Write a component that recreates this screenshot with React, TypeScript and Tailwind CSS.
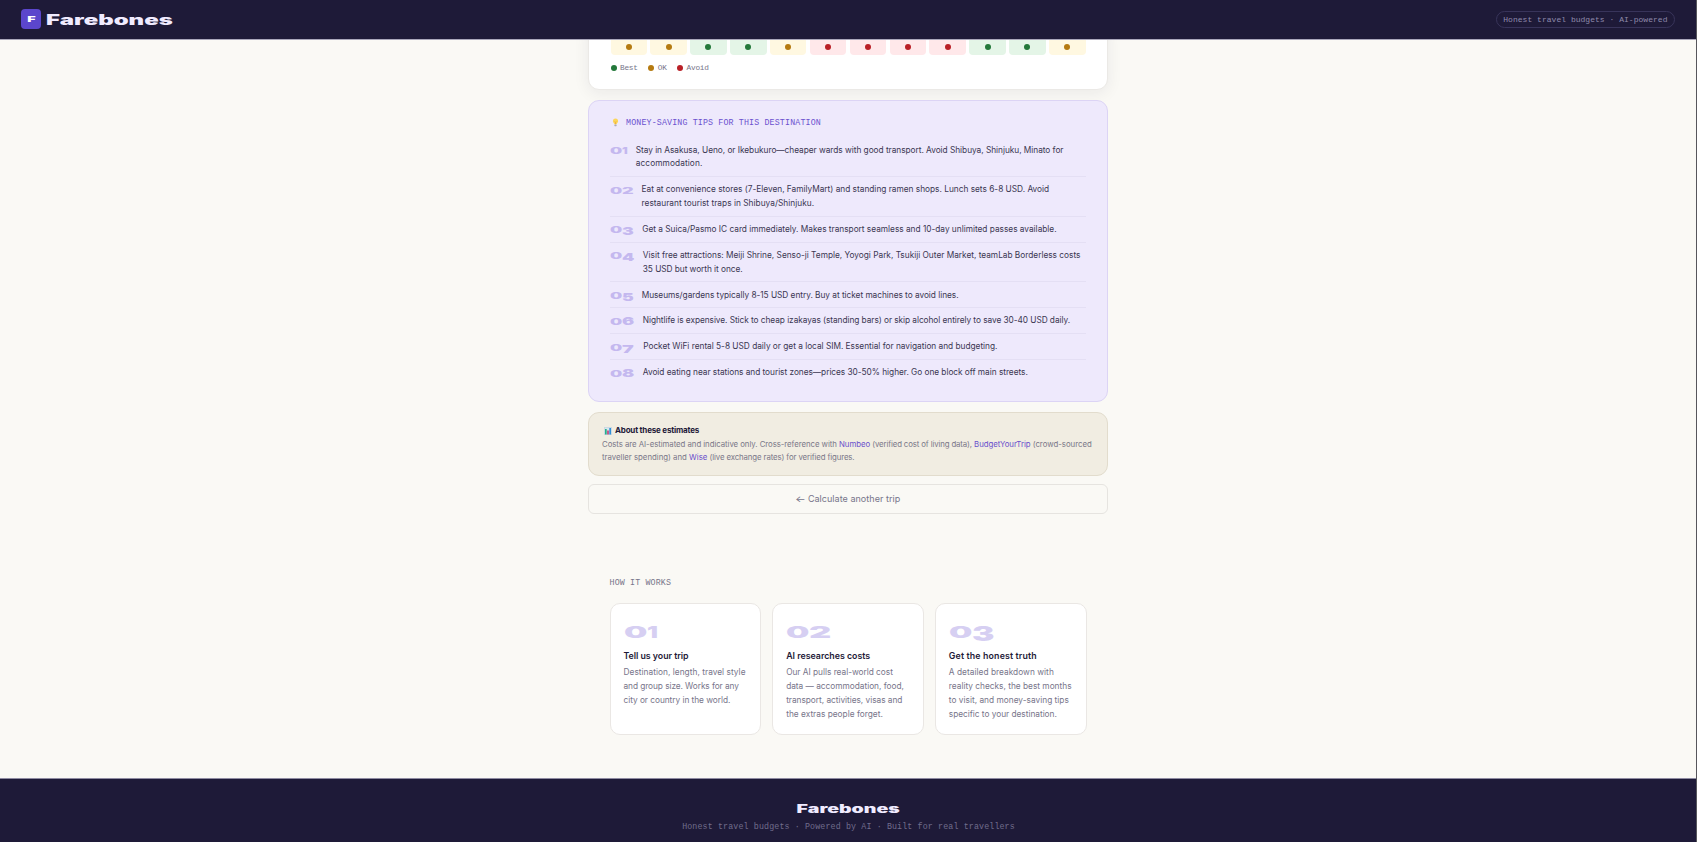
import type { ReactNode } from 'react';

type Rating = 'best' | 'ok' | 'avoid';

const MONO = "font-['Liberation_Mono',monospace]";

const CELL_BG: Record<Rating, string> = {
    best: 'bg-[#e4f5e7]',
    ok: 'bg-[#fff8e1]',
    avoid: 'bg-[#ffe8ea]',
};

const DOT_BG: Record<Rating, string> = {
    best: 'bg-[#23783a]',
    ok: 'bg-[#b57a10]',
    avoid: 'bg-[#b92027]',
};

const MONTHS: { name: string; rating: Rating }[] = [
    { name: 'Jan', rating: 'ok' },
    { name: 'Feb', rating: 'ok' },
    { name: 'Mar', rating: 'best' },
    { name: 'Apr', rating: 'best' },
    { name: 'May', rating: 'ok' },
    { name: 'Jun', rating: 'avoid' },
    { name: 'Jul', rating: 'avoid' },
    { name: 'Aug', rating: 'avoid' },
    { name: 'Sep', rating: 'avoid' },
    { name: 'Oct', rating: 'best' },
    { name: 'Nov', rating: 'best' },
    { name: 'Dec', rating: 'ok' },
];

const LEGEND: { label: string; rating: Rating }[] = [
    { label: 'Best', rating: 'best' },
    { label: 'OK', rating: 'ok' },
    { label: 'Avoid', rating: 'avoid' },
];

const TIPS: { digit: string; width: string; lines: { text: string; track: string }[] }[] = [
    {
        digit: '1',
        width: 'w-[25.7px]',
        lines: [
            {
                text: 'Stay in Asakusa, Ueno, or Ikebukuro—cheaper wards with good transport. Avoid Shibuya, Shinjuku, Minato for',
                track: 'tracking-[-0.031px]',
            },
            { text: 'accommodation.', track: 'tracking-[0.1px]' },
        ],
    },
    {
        digit: '2',
        width: 'w-[31.5px]',
        lines: [
            {
                text: 'Eat at convenience stores (7-Eleven, FamilyMart) and standing ramen shops. Lunch sets 6-8 USD. Avoid',
                track: 'tracking-[-0.004px]',
            },
            { text: 'restaurant tourist traps in Shibuya/Shinjuku.', track: 'tracking-[0.027px]' },
        ],
    },
    {
        digit: '3',
        width: 'w-[32.3px]',
        lines: [
            {
                text: 'Get a Suica/Pasmo IC card immediately. Makes transport seamless and 10-day unlimited passes available.',
                track: 'tracking-[-0.009px]',
            },
        ],
    },
    {
        digit: '4',
        width: 'w-[32.8px]',
        lines: [
            {
                text: 'Visit free attractions: Meiji Shrine, Senso-ji Temple, Yoyogi Park, Tsukiji Outer Market, teamLab Borderless costs',
                track: 'tracking-[-0.006px]',
            },
            { text: '35 USD but worth it once.', track: 'tracking-[-0.051px]' },
        ],
    },
    {
        digit: '5',
        width: 'w-[31.7px]',
        lines: [
            {
                text: 'Museums/gardens typically 8-15 USD entry. Buy at ticket machines to avoid lines.',
                track: 'tracking-[-0.034px]',
            },
        ],
    },
    {
        digit: '6',
        width: 'w-[32.8px]',
        lines: [
            {
                text: 'Nightlife is expensive. Stick to cheap izakayas (standing bars) or skip alcohol entirely to save 30-40 USD daily.',
                track: 'tracking-[-0.053px]',
            },
        ],
    },
    {
        digit: '7',
        width: 'w-[33.2px]',
        lines: [
            {
                text: 'Pocket WiFi rental 5-8 USD daily or get a local SIM. Essential for navigation and budgeting.',
                track: 'tracking-[-0.012px]',
            },
        ],
    },
    {
        digit: '8',
        width: 'w-[32.8px]',
        lines: [
            {
                text: 'Avoid eating near stations and tourist zones—prices 30-50% higher. Go one block off main streets.',
                track: 'tracking-[-0.032px]',
            },
        ],
    },
];

const STEPS = [
    {
        digit: '1',
        title: 'Tell us your trip',
        titleTrack: 'tracking-[-0.03px]',
        lines: ['Destination, length, travel style', 'and group size. Works for any', 'city or country in the world.'],
        tracks: ['tracking-[0.035px]', 'tracking-[-0.071px]', 'tracking-[-0.039px]'],
    },
    {
        digit: '2',
        title: 'AI researches costs',
        titleTrack: 'tracking-[0px]',
        lines: [
            'Our AI pulls real-world cost',
            'data — accommodation, food,',
            'transport, activities, visas and',
            'the extras people forget.',
        ],
        tracks: ['tracking-[-0.018px]', 'tracking-[-0.013px]', 'tracking-[-0.026px]', 'tracking-[0.015px]'],
    },
    {
        digit: '3',
        title: 'Get the honest truth',
        titleTrack: 'tracking-[0.149px]',
        lines: [
            'A detailed breakdown with',
            'reality checks, the best months',
            'to visit, and money-saving tips',
            'specific to your destination.',
        ],
        tracks: ['tracking-[0.039px]', 'tracking-[0.003px]', 'tracking-[0.017px]', 'tracking-[-0.019px]'],
    },
];

// Old-style figures: 3, 4, 5 and 7 hang below the line, 6 and 8 rise above it
const FIGURE: Record<string, string> = {
    '0': '[transform:scale(2.05,1)]',
    '1': '[transform:scale(1.5,1)]',
    '2': '[transform:scale(2.15,1)]',
    '3': '[transform:scale(2.1,1.27)]',
    '4': '[transform:scale(2.1,1.27)]',
    '5': '[transform:scale(2.1,1.27)]',
    '6': '[transform:scale(2.15,1.3)]',
    '7': '[transform:scale(2.35,1.27)]',
    '8': '[transform:scale(2.15,1.3)]',
};

function Numeral({ digit, large = false }: { digit: string; large?: boolean }) {
    const rises = digit === '6' || digit === '8';
    return (
        <span className={`flex shrink-0 font-black leading-[0.727em] ${large ? 'text-[16px]' : 'text-[8.4px]'}`}>
            <span className={`w-[1.44em] origin-bottom-left ${FIGURE['0']}`}>0</span>
            <span className={`${rises ? 'origin-bottom-left' : 'origin-top-left'} ${FIGURE[digit]}`}>{digit}</span>
        </span>
    );
}

function BulbIcon() {
    return (
        <svg className="h-[9px] w-[7px]" viewBox="0 0 14 18">
            <path
                d="M7 1a5.2 5.2 0 0 0-5.2 5.2c0 2 1.1 3 1.9 4.1.5.7.7 1.4.8 2.2h5c.1-.8.3-1.5.8-2.2.8-1.1 1.9-2.1 1.9-4.1A5.2 5.2 0 0 0 7 1z"
                fill="#fbd65c"
            />
            <path d="M5.5 7l1.5 1.5L8.5 7M7 8.5v4" stroke="#e89b2d" strokeWidth="1.2" fill="none" />
            <rect x="4.7" y="12.8" width="4.6" height="3.6" rx="1.2" fill="#a9aab8" />
        </svg>
    );
}

function ChartIcon() {
    return (
        <svg className="mt-px h-[8px] w-[8px]" viewBox="0 0 16 16">
            <rect x="0.5" y="0.5" width="15" height="15" rx="1" fill="#d9e6ee" stroke="#a8c4d6" />
            <rect x="2" y="4" width="3.4" height="11" fill="#27b08b" />
            <rect x="6.3" y="7" width="3.4" height="8" fill="#c2447c" />
            <rect x="10.6" y="2" width="3.4" height="13" fill="#2f8fd8" />
        </svg>
    );
}

function SourceLink({ children }: { children: ReactNode }) {
    return (
        <a href="#" className="text-[#6a50cc]">
            {children}
        </a>
    );
}

function Header() {
    return (
        <header className="flex h-10 shrink-0 items-center justify-between border-b border-[#aaa7bb] bg-[#1e1a38] pl-[21px] pr-[22px]">
            <div className="flex items-center">
                <span className="mt-[-1px] flex size-5 items-center justify-center rounded-[4px] bg-[#5b46cc] pt-px text-[8.2px] font-black leading-none text-white">
                    <span className="scale-x-[1.75]">F</span>
                </span>
                <span className="ml-[5.2px] origin-left scale-x-[1.71] text-[14px] font-black leading-none text-[#f0ebff]">
                    Farebones
                </span>
            </div>
            <span
                className={`mt-[-1px] flex h-[17px] items-center rounded-full border border-[#38345a] px-[6.5px] pt-[2px] text-[8px] leading-none tracking-[0.03px] text-[#8f8aac] ${MONO}`}
            >
                Honest travel budgets · AI-powered
            </span>
        </header>
    );
}

function MonthsCard() {
    return (
        <section className="-mt-5 h-[69.5px] rounded-[11px] border border-[#ebe9e6] bg-white px-[21.5px] pt-[3px] shadow-[0_3px_16px_rgba(30,26,56,0.07)]">
            <div className="grid grid-cols-12 gap-[3.4px]">
                {MONTHS.map((month) => (
                    <div
                        key={month.name}
                        className={`flex h-[30.5px] flex-col items-center justify-end gap-1 rounded-[4px] pb-[4.5px] ${CELL_BG[month.rating]}`}
                    >
                        <span className="text-[7px] leading-[8px] text-[#33304a]">{month.name}</span>
                        <span className={`size-[6px] rounded-full ${DOT_BG[month.rating]}`} />
                    </div>
                ))}
            </div>
            <div
                className={`mt-[8.5px] flex gap-[10.5px] text-[7.8px] leading-[9px] tracking-[-0.25px] text-[#77758a] ${MONO}`}
            >
                {LEGEND.map((item) => (
                    <span key={item.label} className="flex items-center gap-[3.5px]">
                        <span className={`size-[6px] rounded-full ${DOT_BG[item.rating]}`} />
                        <span className="pt-px">{item.label}</span>
                    </span>
                ))}
            </div>
        </section>
    );
}

function TipsCard() {
    return (
        <section className="mt-[10.5px] h-[301.5px] rounded-[11px] border border-[#dcd4f5] bg-[#eee9fc] px-[21px] pt-[16px]">
            <h2
                className={`flex h-[11px] items-center gap-[7.5px] pl-[1.5px] text-[8.3px] leading-none tracking-[0.15px] text-[#6b51cf] ${MONO}`}
            >
                <BulbIcon />
                <span className="pt-[2px]">MONEY-SAVING TIPS FOR THIS DESTINATION</span>
            </h2>
            <ol className="mt-[9.4px]">
                {TIPS.map((tip) => (
                    <li
                        key={tip.digit}
                        className="flex border-b border-[#e4dff4] pb-[5px] pt-[6.4px] text-[8.3px] leading-[13.6px] text-[#3b3752] last:border-b-0"
                    >
                        <span className={`shrink-0 pt-[4.3px] text-[#c4b8ef] ${tip.width}`}>
                            <Numeral digit={tip.digit} />
                        </span>
                        <p className="whitespace-nowrap">
                            {tip.lines.map((line) => (
                                <span key={line.text} className={`block ${line.track}`}>
                                    {line.text}
                                </span>
                            ))}
                        </p>
                    </li>
                ))}
            </ol>
        </section>
    );
}

function EstimatesNote() {
    return (
        <section className="mt-[10.5px] h-[63.5px] whitespace-nowrap rounded-[11px] border border-[#e2dccd] bg-[#f1ede2] px-[13px] pt-[10.9px] text-[7.8px] leading-[13.8px] text-[#7a7788]">
            <h3 className="flex items-center gap-[3.5px] pl-[1.5px] text-[8px] font-bold tracking-[-0.188px] text-[#1e1a38]">
                <ChartIcon />
                About these estimates
            </h3>
            <p className="tracking-[-0.046px]">
                Costs are AI-estimated and indicative only. Cross-reference with <SourceLink>Numbeo</SourceLink>{' '}
                <span className="tracking-[-0.12px]">(verified cost of living data),</span>{' '}
                <SourceLink>BudgetYourTrip</SourceLink> <span className="tracking-[0px]">(crowd-sourced</span>
            </p>
            <p>
                traveller spending) and <SourceLink>Wise</SourceLink>{' '}
                <span className="tracking-[-0.103px]">(live exchange rates) for verified figures.</span>
            </p>
        </section>
    );
}

function HowItWorks() {
    return (
        <section className="mx-auto mt-[64.7px] w-[477px]">
            <h2 className={`text-[8.3px] leading-[10px] tracking-[0.15px] text-[#77758a] ${MONO}`}>HOW IT WORKS</h2>
            <div className="mt-[15.3px] grid grid-cols-3 gap-[11px]">
                {STEPS.map((step) => (
                    <article
                        key={step.digit}
                        className="h-[131.5px] whitespace-nowrap rounded-[10px] border border-[#eae7e4] bg-white px-[13px] pt-[23px]"
                    >
                        <div className="text-[#d6cff2]">
                            <Numeral digit={step.digit} large />
                        </div>
                        <h3
                            className={`mt-[10.4px] text-[8.8px] font-semibold leading-[12px] text-[#1e1a38] ${step.titleTrack}`}
                        >
                            {step.title}
                        </h3>
                        <p className="mt-[4.9px] text-[8.3px] leading-[13.8px] text-[#77758a]">
                            {step.lines.map((line, i) => (
                                <span key={line} className={`block ${step.tracks[i]}`}>
                                    {line}
                                </span>
                            ))}
                        </p>
                    </article>
                ))}
            </div>
        </section>
    );
}

function Footer() {
    return (
        <footer className="flex h-16 shrink-0 flex-col items-center border-t border-[#8e8ba2] bg-[#1e1a38] pt-[23px]">
            <span className="scale-x-[1.71] text-[11.4px] font-black leading-[14px] text-[#f0ebff]">Farebones</span>
            <span className={`mt-[6px] text-[8.3px] leading-[10px] tracking-[0.14px] text-[#716d8c] ${MONO}`}>
                Honest travel budgets · Powered by AI · Built for real travellers
            </span>
        </footer>
    );
}

export default function App() {
    return (
        <div className="relative flex h-[842px] flex-col overflow-hidden bg-[#faf9f5] font-['Inter',sans-serif]">
            <Header />
            <main className="flex-1 overflow-hidden pr-px">
                <div className="mx-auto w-[520px]">
                    <MonthsCard />
                    <TipsCard />
                    <EstimatesNote />
                    <button className="mt-2 flex h-[30px] w-full items-center justify-center gap-[3.5px] rounded-[6px] border border-[#e6e4e0] pt-px text-[9px] tracking-[0.04px] text-[#77758a]">
                        <span className="scale-x-125">←</span>
                        <span>Calculate another trip</span>
                    </button>
                    <HowItWorks />
                </div>
            </main>
            <Footer />
            <div className="absolute inset-y-0 right-0 w-px bg-[#57565c]" />
        </div>
    );
}
